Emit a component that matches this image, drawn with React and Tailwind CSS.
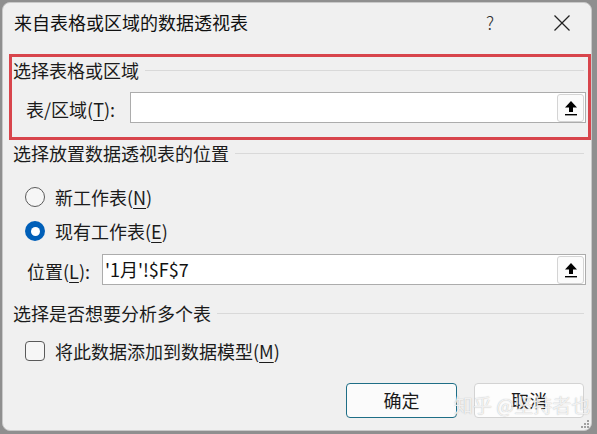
import React from "react";

const font = { fontFamily: '"Noto Sans CJK SC", "Noto Sans", sans-serif' };

function UpBtn() {
  return (
    <div className="w-[27px] h-[28px] mr-[1px] flex items-center justify-center bg-[#fbfbfb] border border-[#d4d4d4] rounded-[3px]">
      <svg width="14" height="16" viewBox="0 0 14 16">
        <polygon points="7,1 13,7.5 9,7.5 9,12 5,12 5,7.5 1,7.5" fill="#000" />
        <rect x="1" y="14" width="12" height="1.4" fill="#000" />
      </svg>
    </div>
  );
}

function Input({ value }) {
  return (
    <div className="flex-1 h-[31px] bg-white border border-[#acacac] flex items-center justify-between">
      <span className="pl-[2px] text-[18px] text-[#111]">{value}</span>
      <UpBtn />
    </div>
  );
}

function Heading({ children }) {
  return (
    <div className="h-[26px] flex items-center">
      <span className="text-[18px] text-[#1b1b1b] whitespace-nowrap">{children}</span>
      <div className="flex-1 h-px bg-[#d9d9d9] ml-[6px] mr-[2px]" />
    </div>
  );
}

export default function App() {
  return (
    <div className="w-[597px] h-[434px] bg-[#8f8f8f] overflow-hidden relative" style={font}>
      <div className="ml-[2px] mt-[2px] w-[590px] h-[429px] bg-[#f0f0f0] rounded-[8px] border border-[#c9c9c9] flex flex-col relative text-[#1b1b1b]">
        {/* title bar */}
        <div className="h-[39px] flex items-center">
          <span className="ml-[11px] text-[18px] text-[#111]">来自表格或区域的数据透视表</span>
          <div className="flex-1" />
          <span className="text-[18px] text-[#333] font-light mr-[59px]">?</span>
          <svg width="18" height="18" viewBox="0 0 18 18" className="mr-[20px]">
            <line x1="1.5" y1="1.5" x2="16.5" y2="16.5" stroke="#222" strokeWidth="1.2" />
            <line x1="16.5" y1="1.5" x2="1.5" y2="16.5" stroke="#222" strokeWidth="1.2" />
          </svg>
        </div>

        {/* red box */}
        <div className="mt-[12px] ml-[6px] w-[582px] border-[3px] border-[#d8454c] pl-[1px] pr-[2px] pb-[14px]">
          <Heading>选择表格或区域</Heading>
          <div className="mt-[9px] flex items-center">
            <span className="pl-[13px] w-[117px] text-[18px] mt-[3px]">
              表/区域(<span className="underline underline-offset-[3px]">T</span>):
            </span>
            <Input value="" />
          </div>
        </div>

        {/* section 2 */}
        <div className="mt-0 pl-[10px] pr-[5px]">
          <Heading>选择放置数据透视表的位置</Heading>
          <div className="mt-[16px] h-[30px] flex items-center pl-[12px]">
            <div className="w-[20px] h-[20px] rounded-full border border-[#5a5a5a] bg-[#f6f6f6]" />
            <span className="ml-[10px] text-[18px]">
              新工作表(<span className="underline underline-offset-[3px]">N</span>)
            </span>
          </div>
          <div className="mt-[4px] h-[30px] flex items-center pl-[12px]">
            <div className="w-[20px] h-[20px] rounded-full bg-[#005fb8] flex items-center justify-center">
              <div className="w-[9px] h-[9px] rounded-full bg-white" />
            </div>
            <span className="ml-[10px] text-[18px]">
              现有工作表(<span className="underline underline-offset-[3px]">E</span>)
            </span>
          </div>
          <div className="mt-[8px] flex items-center">
            <span className="pl-[14px] w-[89px] text-[18px] mt-[3px]">
              位置(<span className="underline underline-offset-[3px]">L</span>):
            </span>
            <Input value="'1月'!$F$7" />
          </div>
        </div>

        {/* section 3 */}
        <div className="mt-[15px] pl-[10px] pr-[5px]">
          <Heading>选择是否想要分析多个表</Heading>
          <div className="mt-[10px] h-[30px] flex items-center pl-[12px]">
            <div className="w-[20px] h-[20px] rounded-[4px] border border-[#5a5a5a] bg-[#f6f6f6]" />
            <span className="ml-[10px] text-[18px]">
              将此数据添加到数据模型(<span className="underline underline-offset-[3px]">M</span>)
            </span>
          </div>
        </div>

        {/* buttons */}
        <div className="mt-[17px] flex justify-end pr-[7px] gap-[17px]">
          <div className="w-[111px] h-[35px] rounded-[4px] border border-[#1e6e86] bg-[#fbfbfb] flex items-center justify-center text-[18px]">
            确定
          </div>
          <div className="w-[110px] h-[35px] rounded-[4px] border border-[#d3d3d3] bg-[#fdfdfd] flex items-center justify-center text-[18px]">
            取消
          </div>
        </div>

        {/* resize grip */}
        <svg width="9" height="9" viewBox="0 0 9 9" className="absolute right-[1px] bottom-[1px]">
          <rect x="6" y="0" width="2" height="2" fill="#a0a0a0" />
          <rect x="3" y="3" width="2" height="2" fill="#a0a0a0" />
          <rect x="6" y="3" width="2" height="2" fill="#a0a0a0" />
          <rect x="0" y="6" width="2" height="2" fill="#a0a0a0" />
          <rect x="3" y="6" width="2" height="2" fill="#a0a0a0" />
          <rect x="6" y="6" width="2" height="2" fill="#a0a0a0" />
        </svg>
      </div>

      {/* watermark */}
      <div className="absolute left-[454px] top-[391px] text-[19px] text-white/80 whitespace-nowrap" style={{ textShadow: "0 0 1px rgba(120,120,120,0.6)" }}>
        知乎 @坚持者也
      </div>
    </div>
  );
}
